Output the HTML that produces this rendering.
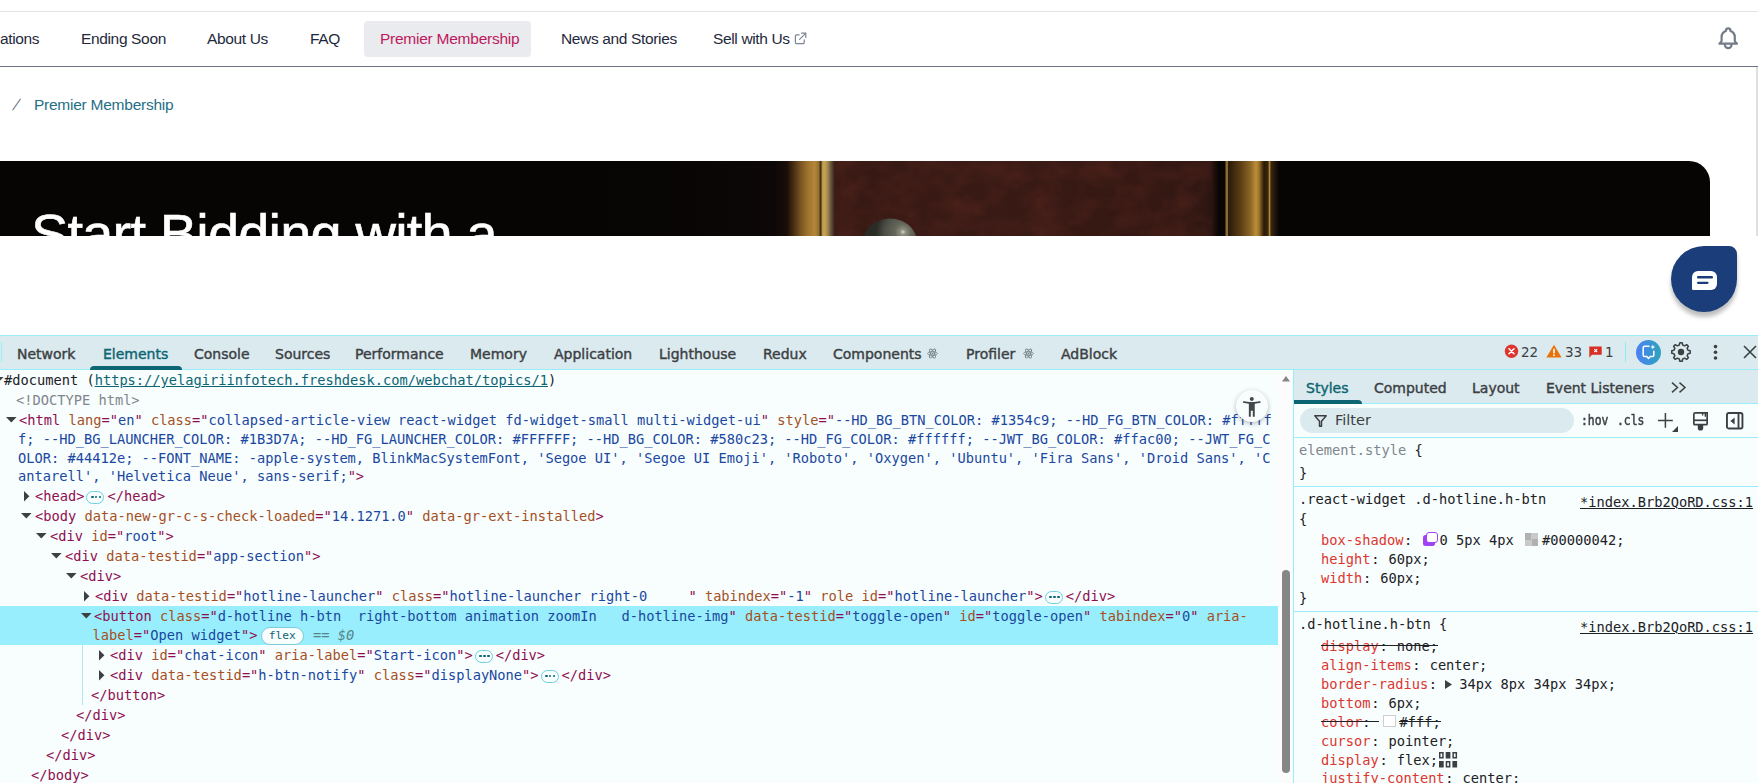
<!DOCTYPE html>
<html lang="en">
<head>
<meta charset="utf-8">
<title>Premier Membership</title>
<style>
*{box-sizing:border-box;margin:0;padding:0}
html,body{width:1758px;height:783px;overflow:hidden;background:#fff}
body{position:relative;font-family:"Liberation Sans",sans-serif}
svg{position:absolute;overflow:visible}
/* ---------- page ---------- */
#page{position:absolute;left:0;top:0;width:1758px;height:335px;background:#fff;overflow:hidden}
#topline{position:absolute;left:0;top:11px;width:1758px;height:1px;background:#e2e4ea}
#navline{position:absolute;left:0;top:66px;width:1758px;height:1px;background:#6b7385}
.nav{position:absolute;top:29px;height:20px;line-height:20px;font-size:15.5px;color:#1e293b;white-space:nowrap;letter-spacing:-0.35px}
#pill{position:absolute;left:364px;top:21px;width:167px;height:36px;border-radius:4px;background:#e9ebef}
.crumb{position:absolute;top:95px;height:20px;line-height:20px;font-size:15.5px;white-space:nowrap;letter-spacing:-0.35px}
#hero{position:absolute;left:0;top:161px;width:1710px;height:75px;background:#060504;border-top-right-radius:21px;overflow:hidden}
#hero h1{position:absolute;left:31px;top:43px;font-size:56px;line-height:60px;font-weight:400;color:#fff;white-space:nowrap;letter-spacing:-0.83px;-webkit-text-stroke:0.6px #fff}
#vline{position:absolute;left:1756px;top:67px;width:2px;height:169px;background:#dfdfdf}
#chat{position:absolute;left:1671px;top:246px;width:66px;height:66px;background:#1b3d7a;border-radius:37px 9px 37px 37px;box-shadow:0 5px 4px rgba(0,0,0,.26)}
/* ---------- devtools ---------- */
#dt{position:absolute;left:0;top:335px;width:1758px;height:448px;background:#f8fdfe;overflow:hidden;font-family:"DejaVu Sans","Liberation Sans",sans-serif}
#tabbar{position:absolute;left:0;top:0;width:1758px;height:35px;background:#dbeaee;border-top:1px solid #9aeefb;border-bottom:1px solid #9aeefb}
.tab{position:absolute;height:20px;line-height:20px;font-size:14px;color:#3c4043;white-space:nowrap;-webkit-text-stroke:0.4px #3c4043}
.tab.on{color:#0b6572;-webkit-text-stroke:0.4px #0b6572}
.ul{position:absolute;height:4px;background:#0b6572;border-radius:4px 4px 0 0}
.cnt{position:absolute;height:20px;line-height:20px;font-size:13.5px;color:#3c4043;white-space:nowrap}
.row{position:absolute;height:20px;line-height:20px;white-space:pre;color:#202124;font-family:"DejaVu Sans Mono","Liberation Mono",monospace;font-size:13.69px}
.t{color:#8f0e50}.a{color:#a5501e}.v{color:#1a48a0}.g{color:#80868b}.lnk{color:#0b6572;text-decoration:underline}
.p{color:#dc362e}.k{color:#202124}
.hl{position:absolute;background:#98eefc}
.hline{position:absolute;height:1px;background:#9aeefb}
.dots{display:inline-block;vertical-align:middle;position:relative;width:18px;height:13px;border:1px solid #6ad0e0;border-radius:6.5px;margin:0 3px 0 2px;background:#f8fdfe}
.dots i{position:absolute;top:4.1px;width:2.6px;height:2.6px;border-radius:1.3px;background:#0b6572}
.flex{display:inline-block;vertical-align:middle;height:18px;line-height:16px;border:1px solid #7accd8;border-radius:9px;background:#f8fdfe;color:#0b6572;font-size:11.25px;padding:0 7px;margin:-1px 0 0 3.2px}
.eq{color:#54838a;font-style:italic}
.strike{position:relative;display:inline-block}.strike:after{content:'';position:absolute;left:0;right:0;top:9px;height:1px;background:#202124}
.src{position:absolute;height:20px;line-height:20px;white-space:pre;color:#202124;font-family:"DejaVu Sans Mono","Liberation Mono",monospace;font-size:13.69px;text-decoration:underline}
</style>
</head>
<body>
<div id="page">
<div id="topline"></div>
<div class="nav" style="left:0px">ations</div>
<div class="nav" style="left:81px">Ending Soon</div>
<div class="nav" style="left:207px">About Us</div>
<div class="nav" style="left:310px">FAQ</div>
<div id="pill"></div>
<div class="nav" style="left:380px;color:#be1a5c;letter-spacing:-0.25px">Premier Membership</div>
<div class="nav" style="left:561px">News and Stories</div>
<div class="nav" style="left:713px">Sell with Us</div>
<svg style="left:794px;top:32px" width="13" height="13" viewBox="0 0 13 13" fill="none" stroke="#7b8494" stroke-width="1.2" stroke-linecap="round" stroke-linejoin="round"><path d="M5.2 2.8H2.6a1.2 1.2 0 0 0-1.2 1.2v6.4a1.2 1.2 0 0 0 1.2 1.2H9a1.2 1.2 0 0 0 1.2-1.2V7.8"/><path d="M7.6 1.2h4.2v4.2"/><path d="M11.6 1.4 5.6 7.4"/></svg>
<svg style="left:1714.700px;top:24.800px" width="26.400" height="26.400" viewBox="0 0 24 24" fill="none" stroke="#747c88" stroke-width="2" stroke-linecap="round" stroke-linejoin="round"><path d="M15 17h5l-1.405-1.405A2.032 2.032 0 0118 14.158V11a6.002 6.002 0 00-4-5.659V5a2 2 0 10-4 0v.341C7.670 6.165 6 8.388 6 11v3.159c0 .538-.214 1.055-.595 1.436L4 17h5m6 0v1a3 3 0 11-6 0v-1m6 0H9"/></svg>
<div id="navline"></div>
<div class="crumb" style="left:14px;color:#6b7280;transform:skewX(-23deg)">/</div>
<div class="crumb" style="left:34px;color:#1f6f86;letter-spacing:-0.25px">Premier Membership</div>
<div id="hero">
<svg style="left:0;top:0" width="1710" height="75" viewBox="0 0 1710 75"><defs><linearGradient id="hg" gradientUnits="userSpaceOnUse" x1="600" x2="1280" y1="0" y2="0"><stop offset="0.0000" stop-color="#060504"/><stop offset="0.1471" stop-color="#090605"/><stop offset="0.2574" stop-color="#0d0807"/><stop offset="0.2750" stop-color="#1a0e08"/><stop offset="0.2853" stop-color="#4a3014"/><stop offset="0.2956" stop-color="#7a5622"/><stop offset="0.3059" stop-color="#a0742e"/><stop offset="0.3156" stop-color="#b4863a"/><stop offset="0.3216" stop-color="#94702e"/><stop offset="0.3246" stop-color="#3a2a10"/><stop offset="0.3272" stop-color="#b8964a"/><stop offset="0.3294" stop-color="#c8a454"/><stop offset="0.3338" stop-color="#b09050"/><stop offset="0.3387" stop-color="#6e5e40"/><stop offset="0.3426" stop-color="#4a3828"/><stop offset="0.3456" stop-color="#371914"/><stop offset="0.5882" stop-color="#391a15"/><stop offset="0.8088" stop-color="#351813"/><stop offset="0.8897" stop-color="#301712"/><stop offset="0.9000" stop-color="#2a1410"/><stop offset="0.9103" stop-color="#080504"/><stop offset="0.9191" stop-color="#0a0604"/><stop offset="0.9206" stop-color="#8a6a30"/><stop offset="0.9228" stop-color="#8a6a30"/><stop offset="0.9243" stop-color="#2a1a0a"/><stop offset="0.9412" stop-color="#5a3c14"/><stop offset="0.9559" stop-color="#8a6424"/><stop offset="0.9647" stop-color="#bc8e3a"/><stop offset="0.9691" stop-color="#9c742c"/><stop offset="0.9765" stop-color="#2a1a08"/><stop offset="0.9824" stop-color="#3a280e"/><stop offset="0.9846" stop-color="#b08a3a"/><stop offset="0.9868" stop-color="#3a280e"/><stop offset="0.9956" stop-color="#140c06"/><stop offset="1.0000" stop-color="#050404"/></linearGradient><radialGradient id="knob" gradientUnits="userSpaceOnUse" cx="903" cy="71" r="27"><stop offset="0" stop-color="#d8d6c0"/><stop offset=".1" stop-color="#8e8e7e"/><stop offset=".3" stop-color="#66675b"/><stop offset=".7" stop-color="#4c4d44"/><stop offset="1" stop-color="#2a2b25"/></radialGradient><filter id="nz" x="0" y="0" width="100%" height="100%" color-interpolation-filters="sRGB"><feTurbulence type="fractalNoise" baseFrequency="0.035 0.05" numOctaves="3" seed="7"/><feColorMatrix type="matrix" values="0 0 0 0 0.42  0 0 0 0 0.17  0 0 0 0 0.14  0.5 0.5 0 0 -0.40"/></filter></defs><rect x="600" y="0" width="680" height="75" fill="url(#hg)"/><rect x="835" y="0" width="377" height="75" filter="url(#nz)"/><ellipse cx="890" cy="80" rx="26.500" ry="22.500" fill="url(#knob)"/></svg>
<h1>Start Bidding with a</h1>
</div>
<div id="vline"></div>
<div id="chat"><svg style="left:21px;top:25px" width="25" height="19" viewBox="0 0 25 19"><path d="M6 0h13a6 6 0 0 1 6 6v7a6 6 0 0 1-6 6H1.200a1.200 1.200 0 0 1-1.200-1.200V6a6 6 0 0 1 6-6z" fill="#fff"/><rect x="5" y="5" width="16" height="2.400" rx="1.200" fill="#1b3d7a"/><rect x="5" y="10.700" width="11.600" height="2.200" rx="1.100" fill="#1b3d7a"/></svg></div>
</div>
<div id="dt">
<div id="tabbar"></div>
<div style="position:absolute;left:1px;top:7px;width:1px;height:20px;background:#9aeefb"></div>
<div class="tab" style="left:17px;top:9px">Network</div>
<div class="tab on" style="left:103px;top:9px">Elements</div>
<div class="tab" style="left:194px;top:9px">Console</div>
<div class="tab" style="left:275px;top:9px">Sources</div>
<div class="tab" style="left:355px;top:9px">Performance</div>
<div class="tab" style="left:470px;top:9px">Memory</div>
<div class="tab" style="left:554px;top:9px">Application</div>
<div class="tab" style="left:659px;top:9px">Lighthouse</div>
<div class="tab" style="left:763px;top:9px">Redux</div>
<div class="tab" style="left:833px;top:9px">Components</div>
<div class="tab" style="left:966px;top:9px">Profiler</div>
<div class="tab" style="left:1061px;top:9px">AdBlock</div>
<div class="ul" style="left:90px;top:31px;width:92px"></div>
<svg style="left:926.5px;top:12.5px" width="11" height="11" viewBox="-5.500 -5.500 11 11" fill="none" stroke="#7a8a90" stroke-width=".9"><ellipse rx="5" ry="1.900"/><ellipse rx="5" ry="1.900" transform="rotate(60)"/><ellipse rx="5" ry="1.900" transform="rotate(120)"/><circle r="1" fill="#7a8a90" stroke="none"/></svg>
<svg style="left:1022.5px;top:12.5px" width="11" height="11" viewBox="-5.500 -5.500 11 11" fill="none" stroke="#7a8a90" stroke-width=".9"><ellipse rx="5" ry="1.900"/><ellipse rx="5" ry="1.900" transform="rotate(60)"/><ellipse rx="5" ry="1.900" transform="rotate(120)"/><circle r="1" fill="#7a8a90" stroke="none"/></svg>
<div class="hl" style="left:0;top:271px;width:1278px;height:39px"></div>
<div style="position:absolute;left:82px;top:310px;width:1px;height:60px;background:#aeeaf5"></div>
<svg style="left:-6.8px;top:42px" width="10.600" height="5.400" viewBox="0 0 10.600 5.400"><path d="M0 0h10.600L5.300 5.400z" fill="#3c4043"/></svg>
<div class="row" style="left:4px;top:35px">#document (<span class="lnk">https://yelagiriinfotech.freshdesk.com/webchat/topics/1</span>)</div>
<div class="row" style="left:16px;top:55px"><span class="g">&lt;!DOCTYPE html&gt;</span></div>
<svg style="left:6.2px;top:82px" width="10.600" height="5.400" viewBox="0 0 10.600 5.400"><path d="M0 0h10.600L5.300 5.400z" fill="#3c4043"/></svg>
<div class="row" style="left:19px;top:75px"><span class="t">&lt;html</span> <span class="a">lang</span><span class="t">="</span><span class="v">en</span><span class="t">"</span> <span class="a">class</span><span class="t">="</span><span class="v">collapsed-article-view react-widget fd-widget-small multi-widget-ui</span><span class="t">"</span> <span class="a">style</span><span class="t">="</span><span class="v">--HD_BG_BTN_COLOR: #1354c9; --HD_FG_BTN_COLOR: #fffff</span></div>
<div class="row" style="left:18px;top:94px"><span class="v">f; --HD_BG_LAUNCHER_COLOR: #1B3D7A; --HD_FG_LAUNCHER_COLOR: #FFFFFF; --HD_BG_COLOR: #580c23; --HD_FG_COLOR: #ffffff; --JWT_BG_COLOR: #ffac00; --JWT_FG_C</span></div>
<div class="row" style="left:18px;top:113px"><span class="v">OLOR: #44412e; --FONT_NAME: -apple-system, BlinkMacSystemFont, 'Segoe UI', 'Segoe UI Emoji', 'Roboto', 'Oxygen', 'Ubuntu', 'Fira Sans', 'Droid Sans', 'C</span></div>
<div class="row" style="left:18px;top:131px"><span class="v">antarell', 'Helvetica Neue', sans-serif;</span><span class="t">"&gt;</span></div>
<svg style="left:24.1px;top:155.7px" width="5.400" height="10.400" viewBox="0 0 5.400 10.400"><path d="M0 0v10.400L5.400 5.200z" fill="#3c4043"/></svg>
<div class="row" style="left:35px;top:151px"><span class="t">&lt;head&gt;</span><span class="dots"><i style="left:3.5px"></i><i style="left:7.3px"></i><i style="left:11.3px"></i></span><span class="t">&lt;/head&gt;</span></div>
<svg style="left:21.2px;top:178px" width="10.600" height="5.400" viewBox="0 0 10.600 5.400"><path d="M0 0h10.600L5.300 5.400z" fill="#3c4043"/></svg>
<div class="row" style="left:35px;top:171px"><span class="t">&lt;body</span> <span class="a">data-new-gr-c-s-check-loaded</span><span class="t">="</span><span class="v">14.1271.0</span><span class="t">"</span> <span class="a">data-gr-ext-installed</span><span class="t">&gt;</span></div>
<svg style="left:36.2px;top:198px" width="10.600" height="5.400" viewBox="0 0 10.600 5.400"><path d="M0 0h10.600L5.300 5.400z" fill="#3c4043"/></svg>
<div class="row" style="left:50px;top:191px"><span class="t">&lt;div</span> <span class="a">id</span><span class="t">="</span><span class="v">root</span><span class="t">"</span><span class="t">&gt;</span></div>
<svg style="left:51.2px;top:218px" width="10.600" height="5.400" viewBox="0 0 10.600 5.400"><path d="M0 0h10.600L5.300 5.400z" fill="#3c4043"/></svg>
<div class="row" style="left:65px;top:211px"><span class="t">&lt;div</span> <span class="a">data-testid</span><span class="t">="</span><span class="v">app-section</span><span class="t">"</span><span class="t">&gt;</span></div>
<svg style="left:66.2px;top:238px" width="10.600" height="5.400" viewBox="0 0 10.600 5.400"><path d="M0 0h10.600L5.300 5.400z" fill="#3c4043"/></svg>
<div class="row" style="left:80px;top:231px"><span class="t">&lt;div&gt;</span></div>
<svg style="left:84.1px;top:255.7px" width="5.400" height="10.400" viewBox="0 0 5.400 10.400"><path d="M0 0v10.400L5.400 5.200z" fill="#3c4043"/></svg>
<div class="row" style="left:95px;top:251px"><span class="t">&lt;div</span> <span class="a">data-testid</span><span class="t">="</span><span class="v">hotline-launcher</span><span class="t">"</span> <span class="a">class</span><span class="t">="</span><span class="v">hotline-launcher right-0     </span><span class="t">"</span> <span class="a">tabindex</span><span class="t">="</span><span class="v">-1</span><span class="t">"</span> <span class="a">role</span> <span class="a">id</span><span class="t">="</span><span class="v">hotline-launcher</span><span class="t">"</span><span class="t">&gt;</span><span class="dots"><i style="left:3.5px"></i><i style="left:7.3px"></i><i style="left:11.3px"></i></span><span class="t">&lt;/div&gt;</span></div>
<svg style="left:81.2px;top:278px" width="10.600" height="5.400" viewBox="0 0 10.600 5.400"><path d="M0 0h10.600L5.300 5.400z" fill="#3c4043"/></svg>
<div class="row" style="left:94px;top:271px"><span class="t">&lt;button</span> <span class="a">class</span><span class="t">="</span><span class="v">d-hotline h-btn  right-bottom animation zoomIn   d-hotline-img</span><span class="t">"</span> <span class="a">data-testid</span><span class="t">="</span><span class="v">toggle-open</span><span class="t">"</span> <span class="a">id</span><span class="t">="</span><span class="v">toggle-open</span><span class="t">"</span> <span class="a">tabindex</span><span class="t">="</span><span class="v">0</span><span class="t">"</span> <span class="a">aria-</span></div>
<div class="row" style="left:92.6px;top:290px"><span class="a">label</span><span class="t">="</span><span class="v">Open widget</span><span class="t">"</span><span class="t">&gt;</span><span class="flex">flex</span><span class="eq" style="margin-left:1px"> == $0</span></div>
<svg style="left:99.1px;top:314.7px" width="5.400" height="10.400" viewBox="0 0 5.400 10.400"><path d="M0 0v10.400L5.400 5.200z" fill="#3c4043"/></svg>
<div class="row" style="left:110px;top:310px"><span class="t">&lt;div</span> <span class="a">id</span><span class="t">="</span><span class="v">chat-icon</span><span class="t">"</span> <span class="a">aria-label</span><span class="t">="</span><span class="v">Start-icon</span><span class="t">"</span><span class="t">&gt;</span><span class="dots"><i style="left:3.5px"></i><i style="left:7.3px"></i><i style="left:11.3px"></i></span><span class="t">&lt;/div&gt;</span></div>
<svg style="left:99.1px;top:334.7px" width="5.400" height="10.400" viewBox="0 0 5.400 10.400"><path d="M0 0v10.400L5.400 5.200z" fill="#3c4043"/></svg>
<div class="row" style="left:110px;top:330px"><span class="t">&lt;div</span> <span class="a">data-testid</span><span class="t">="</span><span class="v">h-btn-notify</span><span class="t">"</span> <span class="a">class</span><span class="t">="</span><span class="v">displayNone</span><span class="t">"</span><span class="t">&gt;</span><span class="dots"><i style="left:3.5px"></i><i style="left:7.3px"></i><i style="left:11.3px"></i></span><span class="t">&lt;/div&gt;</span></div>
<div class="row" style="left:91px;top:350px"><span class="t">&lt;/button&gt;</span></div>
<div class="row" style="left:76px;top:370px"><span class="t">&lt;/div&gt;</span></div>
<div class="row" style="left:61px;top:390px"><span class="t">&lt;/div&gt;</span></div>
<div class="row" style="left:46px;top:410px"><span class="t">&lt;/div&gt;</span></div>
<div class="row" style="left:31px;top:430px"><span class="t">&lt;/body&gt;</span></div>
<div style="position:absolute;left:1278px;top:35px;width:15px;height:413px;background:#fcfcfc"></div>
<svg style="left:1281.500px;top:41px" width="8" height="5.500" viewBox="0 0 8 5.500"><path d="M0 5.500h8L4 0z" fill="#858585"/></svg>
<div style="position:absolute;left:1282px;top:235px;width:8px;height:203px;border-radius:4px;background:#868686"></div>
<div style="position:absolute;left:1236px;top:55.19999999999999px;width:32px;height:32px;border-radius:16px;background:#f9fdfe;box-shadow:0 1.500px 5px rgba(0,0,0,.28)"></div>
<svg style="left:1239.950px;top:59.69999999999999px" width="23.600" height="23.600" viewBox="0 0 24 24" fill="#42474a"><path d="M20.500 6c-2.610.7-5.670 1-8.500 1s-5.890-.3-8.500-1L3 8c1.860.5 4 .830 6 1v13h2v-6h2v6h2V9c2-.170 4.140-.5 6-1l-.5-2zM12 6c1.100 0 2-.9 2-2s-.9-2-2-2-2 .9-2 2 .9 2 2 2z"/></svg>
<div style="position:absolute;left:1293px;top:35px;width:1px;height:413px;background:#9aeefb"></div>
<svg style="left:1504px;top:9px" width="15" height="15" viewBox="0 0 15 15"><circle cx="7.500" cy="7.300" r="6.700" fill="#dc362e"/><path d="M5 4.800l5 5M10 4.800l-5 5" stroke="#fff" stroke-width="1.500" stroke-linecap="round"/></svg>
<div class="cnt" style="left:1521px;top:7px">22</div>
<svg style="left:1546px;top:9px" width="16" height="14" viewBox="0 0 16 14"><path d="M8 .8 15.600 13.400H.4z" fill="#e8710a"/><rect x="7.200" y="4.800" width="1.600" height="4.600" fill="#fff"/><rect x="7.200" y="10.400" width="1.600" height="1.600" fill="#fff"/></svg>
<div class="cnt" style="left:1565px;top:7px">33</div>
<svg style="left:1589px;top:11px" width="13" height="12" viewBox="0 0 13 12"><path d="M.3.400h12.400v8.400H3L.3 11.700z" fill="#d93025"/><path d="M5.300 3.200l2.800 2.800M8.100 3.200 5.300 6" stroke="#fff" stroke-width="1.100"/></svg>
<div class="cnt" style="left:1605px;top:7px">1</div>
<div style="position:absolute;left:1625px;top:7px;width:1px;height:20px;background:#8fe9f6"></div>
<svg style="left:1636px;top:5px" width="25" height="25" viewBox="0 0 25 25"><defs><linearGradient id="ai" x1="0" x2="1"><stop offset="0" stop-color="#4a80f5"/><stop offset="1" stop-color="#2fa3bd"/></linearGradient></defs><circle cx="12.500" cy="12.500" r="12.500" fill="url(#ai)"/><path d="M13.500 6.200H8.600a1.400 1.400 0 0 0-1.400 1.400v7.600a1.400 1.400 0 0 0 1.400 1.400h2.200l1.700 1.800 1.700-1.800h2.200a1.400 1.400 0 0 0 1.400-1.400v-4.400" fill="none" stroke="#fff" stroke-width="1.500" stroke-linejoin="round"/><path d="M16.800 4.600l.7 1.700 1.700.7-1.700.7-.7 1.700-.7-1.700-1.700-.7 1.700-.7z" fill="#fff"/></svg>
<svg style="left:1670px;top:6px" width="22" height="22" viewBox="0 0 22 22"><path d="M9.32 4.00 L9.83 1.77 L12.17 1.77 L12.68 4.00 L14.76 4.86 L16.70 3.65 L18.35 5.30 L17.14 7.24 L18.00 9.32 L20.23 9.83 L20.23 12.17 L18.00 12.68 L17.14 14.76 L18.35 16.70 L16.70 18.35 L14.76 17.14 L12.68 18.00 L12.17 20.23 L9.83 20.23 L9.32 18.00 L7.24 17.14 L5.30 18.35 L3.65 16.70 L4.86 14.76 L4.00 12.68 L1.77 12.17 L1.77 9.83 L4.00 9.32 L4.86 7.24 L3.65 5.30 L5.30 3.65 L7.24 4.86Z" fill="none" stroke="#3c4043" stroke-width="1.500" stroke-linejoin="round"/><circle cx="11" cy="11" r="3.200" fill="#3c4043"/></svg>
<svg style="left:1713px;top:9px" width="5" height="17" viewBox="0 0 5 17" fill="#3c4043"><circle cx="2.500" cy="2.600" r="1.800"/><circle cx="2.500" cy="8.300" r="1.800"/><circle cx="2.500" cy="14" r="1.800"/></svg>
<svg style="left:1743px;top:10px" width="14" height="14" viewBox="0 0 14 14"><path d="M1 1l12 12M13 1 1 13" stroke="#3c4043" stroke-width="1.600"/></svg>
<div style="position:absolute;left:1294px;top:35px;width:464px;height:33px;background:#dbeaee"></div>
<div class="hline" style="left:1294px;top:68px;width:464px"></div>
<div class="tab on" style="left:1306px;top:43px">Styles</div>
<div class="tab" style="left:1374px;top:43px">Computed</div>
<div class="tab" style="left:1472px;top:43px">Layout</div>
<div class="tab" style="left:1546px;top:43px">Event Listeners</div>
<div class="ul" style="left:1294px;top:65px;width:68px;height:4px;border-radius:0 4px 0 0"></div>
<svg style="left:1671px;top:47px" width="16" height="11" viewBox="0 0 16 11" fill="none" stroke="#3c4043" stroke-width="1.500"><path d="M1 .6 6.500 5.500 1 10.400M8.500.6 14 5.500 8.500 10.400"/></svg>
<div style="position:absolute;left:1300px;top:73px;width:274px;height:25px;border-radius:13px;background:#dbeaee"></div>
<svg style="left:1314px;top:80px" width="13" height="12" viewBox="0 0 13 12" fill="none" stroke="#3c4043" stroke-width="1.500" stroke-linejoin="round"><path d="M.8.800h11.400L7.500 6.200v5H5.500v-5z"/></svg>
<div class="tab" style="left:1335px;top:75px;-webkit-text-stroke:0;font-size:14.500px">Filter</div>
<div class="tab" style="left:1581px;top:75px;font-family:'DejaVu Sans Mono','Liberation Mono',monospace;font-size:13.750px;transform:scaleX(.83);transform-origin:0 50%;-webkit-text-stroke:.5px #3c4043">:hov</div>
<div class="tab" style="left:1617px;top:75px;font-family:'DejaVu Sans Mono','Liberation Mono',monospace;font-size:13.750px;transform:scaleX(.83);transform-origin:0 50%;-webkit-text-stroke:.5px #3c4043">.cls</div>
<svg style="left:1658px;top:78px" width="20" height="20" viewBox="0 0 20 20"><path d="M7.400 0v14.800M0 7.400h14.800" stroke="#3c4043" stroke-width="1.500"/><path d="M20 13v6h-6z" fill="#3c4043"/></svg>
<svg style="left:1693px;top:76.69999999999999px" width="15" height="19" viewBox="0 0 15 19"><path d="M2.400.850h11.750v10.800a1 1 0 0 1-1 1H1.850a1 1 0 0 1-1-1V2.400A1.550 1.550 0 0 1 2.400.850z" fill="none" stroke="#3c4043" stroke-width="1.700"/><path d="M.850 8.300h13.300" stroke="#3c4043" stroke-width="1.700"/><path d="M9.600.850v2.600M12.300.850v3.800" stroke="#3c4043" stroke-width="1.400"/><path d="M4.800 12.500h5.400v3.400a2.700 2.700 0 0 1-5.400 0z" fill="#3c4043"/></svg>
<svg style="left:1725.600px;top:76.69999999999999px" width="17.400" height="17.400" viewBox="0 0 17.400 17.400"><rect x=".95" y=".95" width="15.500" height="15.500" rx="1.800" fill="none" stroke="#3c4043" stroke-width="1.900"/><path d="M12.500 .95v15.500" stroke="#3c4043" stroke-width="1.900"/><path d="M8.600 5.500v7L4.400 9z" fill="#3c4043"/></svg>
<div class="hline" style="left:1294px;top:102px;width:464px"></div>
<div class="row" style="left:1299px;top:105px"><span class="g">element.style</span> {</div>
<div class="row" style="left:1299px;top:128px">}</div>
<div class="hline" style="left:1294px;top:151px;width:464px"></div>
<div class="row" style="left:1299px;top:154px">.react-widget .d-hotline.h-btn</div>
<div class="src" style="left:1580px;top:157px">*index.Brb2QoRD.css:1</div>
<div class="row" style="left:1299px;top:174px">{</div>
<div class="row" style="left:1321px;top:195px"><span class="p">box-shadow</span><span style="margin-left:.7px">:</span> <span style="display:inline-block;position:relative;width:15px;height:14.500px;vertical-align:middle;margin:-4px 1.500px 0 2.500px"><i style="position:absolute;left:0;top:2.800px;width:12px;height:11.700px;background:#a142f4;border-radius:2.500px"></i><i style="position:absolute;left:2.600px;top:0;width:12.400px;height:11.500px;border:1.900px solid #a142f4;border-radius:3px;background:#fff"></i></span>0 5px 4px <span style="display:inline-block;width:12.800px;height:12.600px;vertical-align:middle;margin:-3.500px 4.200px 0 3px;background:conic-gradient(#c9c9c9 0 25%,#b1b1b1 0 50%,#c9c9c9 0 75%,#b1b1b1 0)"></span>#00000042;</div>
<div class="row" style="left:1321px;top:214px"><span class="p">height</span><span style="margin-left:.7px">:</span> <span style="margin-left:.8px">60px;</span></div>
<div class="row" style="left:1321px;top:233px"><span class="p">width</span><span style="margin-left:.7px">:</span> <span style="margin-left:.8px">60px;</span></div>
<div class="row" style="left:1299px;top:253px">}</div>
<div class="hline" style="left:1294px;top:276px;width:464px"></div>
<div class="row" style="left:1299px;top:279px">.d-hotline.h-btn {</div>
<div class="src" style="left:1580px;top:282px">*index.Brb2QoRD.css:1</div>
<div class="row" style="left:1321px;top:301px"><span class="strike"><span class="p">display</span><span style="margin-left:.7px">:</span> <span style="margin-left:.8px">none;</span></span></div>
<div class="row" style="left:1321px;top:320px"><span class="p">align-items</span><span style="margin-left:.7px">:</span> <span style="margin-left:.8px">center;</span></div>
<div class="row" style="left:1321px;top:339px"><span class="p">border-radius</span><span style="margin-left:.7px">:</span> <svg style="position:static;display:inline-block;vertical-align:middle;margin:-2px 7.200px 0 -0.200px" width="7" height="9" viewBox="0 0 7 9"><path d="M0 0v9l7-4.500z" fill="#3c4043"/></svg>34px 8px 34px 34px;</div>
<div class="row" style="left:1321px;top:358px"><span class="p">bottom</span><span style="margin-left:.7px">:</span> <span style="margin-left:.8px">6px;</span></div>
<div class="row" style="left:1321px;top:376.5px"><span class="strike"><span class="p">color</span>: </span><span style="display:inline-block;width:12.600px;height:12.600px;vertical-align:middle;margin:-3px 3.600px 0 4.600px;background:#fff;border:1px solid #d0d0d0"></span><span class="strike">#fff;</span></div>
<div class="row" style="left:1321px;top:396px"><span class="p">cursor</span><span style="margin-left:.7px">:</span> <span style="margin-left:.8px">pointer;</span></div>
<div class="row" style="left:1321px;top:415px"><span class="p">display</span><span style="margin-left:.7px">:</span> <span style="margin-left:.8px">flex;</span><svg style="position:static;display:inline-block;vertical-align:middle;margin:-2px 0 0 1px" width="18.500" height="16" viewBox="0 0 18.500 16"><rect x="0.75" y="0.75" width="3.200" height="5" fill="none" stroke="#3c4043" stroke-width="1.500"/><rect x="6.7" y="0" width="4.700" height="6.500" fill="#3c4043"/><rect x="14.15" y="0.75" width="3.200" height="5" fill="none" stroke="#3c4043" stroke-width="1.500"/><rect x="0" y="9" width="4.700" height="6.500" fill="#3c4043"/><rect x="7.45" y="9.75" width="3.200" height="5" fill="none" stroke="#3c4043" stroke-width="1.500"/><rect x="13.4" y="9" width="4.700" height="6.500" fill="#3c4043"/></svg></div>
<div class="row" style="left:1321px;top:433px"><span class="p">justify-content</span><span style="margin-left:.7px">:</span> <span style="margin-left:.8px">center;</span></div>
</div>
</body>
</html>
